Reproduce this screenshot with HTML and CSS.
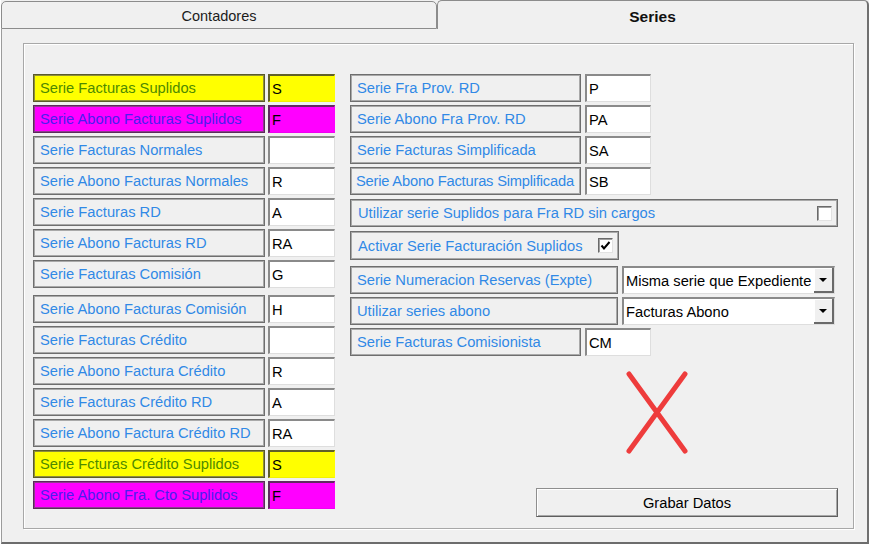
FILE: index.html
```html
<!DOCTYPE html>
<html>
<head>
<meta charset="utf-8">
<link rel="stylesheet" href="styles.css">
</head>
<body>
<div class="window">
  <div class="tabs">
    <div class="tab tab-inactive">Contadores</div>
    <div class="tab tab-active">Series</div>
  </div>
  <div class="panel">
    <div class="group">
      <div class="col col-left">
        <div class="row yellow"><div class="lbl">Serie Facturas Suplidos</div><div class="fld">S</div></div>
        <div class="row magenta"><div class="lbl">Serie Abono Facturas Suplidos</div><div class="fld">F</div></div>
        <div class="row"><div class="lbl">Serie Facturas Normales</div><div class="fld"></div></div>
        <div class="row"><div class="lbl">Serie Abono Facturas Normales</div><div class="fld">R</div></div>
        <div class="row"><div class="lbl">Serie Facturas RD</div><div class="fld">A</div></div>
        <div class="row"><div class="lbl">Serie Abono Facturas RD</div><div class="fld">RA</div></div>
        <div class="row"><div class="lbl">Serie Facturas Comisión</div><div class="fld">G</div></div>
        <div class="row extra"><div class="lbl">Serie Abono Facturas Comisión</div><div class="fld">H</div></div>
        <div class="row"><div class="lbl">Serie Facturas Crédito</div><div class="fld"></div></div>
        <div class="row"><div class="lbl">Serie Abono Factura Crédito</div><div class="fld">R</div></div>
        <div class="row"><div class="lbl">Serie Facturas Crédito RD</div><div class="fld">A</div></div>
        <div class="row"><div class="lbl">Serie Abono Factura Crédito RD</div><div class="fld">RA</div></div>
        <div class="row yellow"><div class="lbl">Serie Fcturas Crédito Suplidos</div><div class="fld">S</div></div>
        <div class="row magenta"><div class="lbl">Serie Abono Fra. Cto Suplidos</div><div class="fld">F</div></div>
      </div>
      <div class="col col-right">
        <div class="row"><div class="lbl">Serie Fra Prov. RD</div><div class="fld">P</div></div>
        <div class="row"><div class="lbl">Serie Abono Fra Prov. RD</div><div class="fld">PA</div></div>
        <div class="row"><div class="lbl">Serie Facturas Simplificada</div><div class="fld">SA</div></div>
        <div class="row"><div class="lbl tight">Serie Abono Facturas Simplificada</div><div class="fld">SB</div></div>
        <div class="check-row wide"><span>Utilizar serie Suplidos para Fra RD sin cargos</span><span class="cb"></span></div>
        <div class="check-row narrow"><span>Activar Serie Facturación Suplidos</span><span class="cb"><svg width="13" height="13" viewBox="0 0 13 13"><path d="M2.5 6.5 L5 9.5 L10.5 3" fill="none" stroke="#000" stroke-width="2"/></svg></span></div>
        <div class="combo-row first"><div class="lbl">Serie Numeracion Reservas (Expte)</div><div class="combo"><span class="combo-text">Misma serie que Expediente</span><span class="combo-btn"><span class="tri"></span></span></div></div>
        <div class="combo-row"><div class="lbl">Utilizar series abono</div><div class="combo"><span class="combo-text">Facturas Abono</span><span class="combo-btn"><span class="tri"></span></span></div></div>
        <div class="row"><div class="lbl">Serie Facturas Comisionista</div><div class="fld">CM</div></div>
        <svg class="cross" width="62" height="84" viewBox="0 0 62 84"><path d="M3 3 L59 80 M59 3 L3 80" stroke="#ee3c3c" stroke-width="5" stroke-linecap="round" fill="none"/></svg>
        <div class="btn">Grabar Datos</div>
      </div>
    </div>
  </div>
</div>
</body>
</html>
```

FILE: styles.css
```css
* { box-sizing: border-box; }
body {
  margin: 0;
  background: #ffffff;
  font-family: "Liberation Sans", Arial, sans-serif;
  font-size: 14.7px;
}
.window {
  margin-left: 1px;
  width: 868px;
  height: 544px;
  display: flex;
  flex-direction: column;
  background: #f0f0f0;
}
.tabs {
  display: flex;
  align-items: flex-end;
  height: 29px;
}
.tab {
  display: flex;
  align-items: center;
  justify-content: center;
}
.tab-inactive {
  width: 436px;
  height: 28px;
  border: 1px solid #8c8c8c;
  border-radius: 5px 5px 0 0;
  color: #1c1c1c;
  font-size: 14.5px;
  padding-top: 1px;
}
.tab-active {
  flex: 1;
  height: 29px;
  border-top: 1px solid #8c8c8c;
  border-left: 1px solid #8c8c8c;
  border-right: 2px solid #707070;
  border-radius: 5px 5px 0 0;
  font-weight: bold;
  font-size: 15.5px;
  color: #101010;
  padding-top: 3px;
}
.panel {
  flex: 1;
  border-left: 1px solid #9c9c9c;
  border-right: 2px solid #707070;
  border-bottom: 2px solid #6c6c6c;
  padding: 14px 0 0 21px;
}
.group {
  width: 831px;
  height: 486px;
  border: 1px solid #a8a8a8;
  box-shadow: 1px 1px 0 #ffffff, inset 1px 1px 0 #ffffff;
  padding: 30px 0 0 9px;
  display: flex;
  gap: 15px;
  align-items: flex-start;
}
.col {
  display: flex;
  flex-direction: column;
  gap: 3px;
}
.col-left { width: 302px; }
.col-right { width: 488px; }
.row {
  display: flex;
  gap: 3px;
  height: 28px;
}
.row.extra { margin-top: 4px; }
.lbl {
  width: 232px;
  border: 1px solid #6e6e6e;
  box-shadow: inset 0 0 0 1px #a9a9a9;
  background: #f0f0f0;
  color: #3089e6;
  padding-left: 6px;
  display: flex;
  align-items: center;
  white-space: nowrap;
  overflow: hidden;
}
.lbl.tight { padding-left: 5px; letter-spacing: -0.2px; }
.fld {
  width: 67px;
  background: #ffffff;
  border-top: 2px solid #8a8a8a;
  border-left: 2px solid #8a8a8a;
  border-right: 1px solid #dedede;
  border-bottom: 1px solid #dedede;
  padding-left: 2px;
  display: flex;
  align-items: center;
  color: #000000;
}
.row.yellow .lbl {
  background: #ffff00;
  color: #4e8a00;
  border-color: #5a5a2c;
  box-shadow: inset 0 0 0 1px #8e8e3c;
}
.row.yellow .fld {
  background: #ffff00;
  border-top-color: #60602a;
  border-left-color: #60602a;
  border-right-color: #ffff00;
  border-bottom-color: #f2f200;
}
.row.magenta .lbl {
  background: #ff00ff;
  color: #4a1ef0;
  border-color: #5c2a5c;
  box-shadow: inset 0 0 0 1px #8e3c8e;
}
.row.magenta .fld {
  background: #ff00ff;
  border-top-color: #602a60;
  border-left-color: #602a60;
  border-right-color: #ff00ff;
  border-bottom-color: #f200f2;
}
.col-right .lbl { width: 231px; }
.col-right .row { gap: 4px; }
.col-right .fld { width: 66px; }
.check-row {
  height: 28px;
  margin-top: 1px;
  border: 1px solid #6e6e6e;
  box-shadow: inset 0 0 0 1px #a9a9a9;
  display: flex;
  align-items: center;
  justify-content: space-between;
  padding: 0 5px 0 7px;
  color: #3089e6;
  white-space: nowrap;
}
.check-row.wide { width: 488px; }
.check-row.narrow { width: 269px; height: 29px; }
.cb {
  width: 15px;
  height: 15px;
  background: #ffffff;
  border-top: 1px solid #6a6a6a;
  border-left: 1px solid #6a6a6a;
  border-right: 1px solid #e2e2e2;
  border-bottom: 1px solid #e2e2e2;
  box-shadow: inset 1px 1px 0 #a0a0a0;
  display: flex;
}
.combo-row {
  display: flex;
  gap: 4px;
  height: 28px;
}
.combo-row.first { margin-top: 3px; }
.combo-row .lbl { width: 268px; }
.combo {
  width: 213px;
  height: 28px;
  background: #ffffff;
  border-top: 2px solid #8a8a8a;
  border-left: 2px solid #8a8a8a;
  border-right: 1px solid #dedede;
  border-bottom: 1px solid #dedede;
  display: flex;
  align-items: stretch;
}
.combo-text {
  flex: 1;
  padding-left: 2px;
  display: flex;
  align-items: center;
  color: #000000;
  white-space: nowrap;
  overflow: hidden;
}
.combo-btn {
  width: 20px;
  background: #f0f0f0;
  border-right: 2px solid #6a6a6a;
  border-bottom: 2px solid #6a6a6a;
  box-shadow: inset 1px 1px 0 #ffffff;
  display: flex;
  align-items: center;
  justify-content: center;
}
.tri {
  width: 0;
  height: 0;
  border-left: 4px solid transparent;
  border-right: 4px solid transparent;
  border-top: 4px solid #000000;
}
.cross {
  display: block;
  margin: 12px 0 0 276px;
}
.btn {
  margin: 30px 0 0 186px;
  width: 302px;
  height: 29px;
  background: #f0f0f0;
  border: 1px solid #8e8e8e;
  border-right-color: #5e5e5e;
  border-bottom-color: #5e5e5e;
  box-shadow: inset 1px 1px 0 #ffffff, inset -1px -1px 0 #a8a8a8;
  display: flex;
  align-items: center;
  justify-content: center;
  color: #000000;
}
```
